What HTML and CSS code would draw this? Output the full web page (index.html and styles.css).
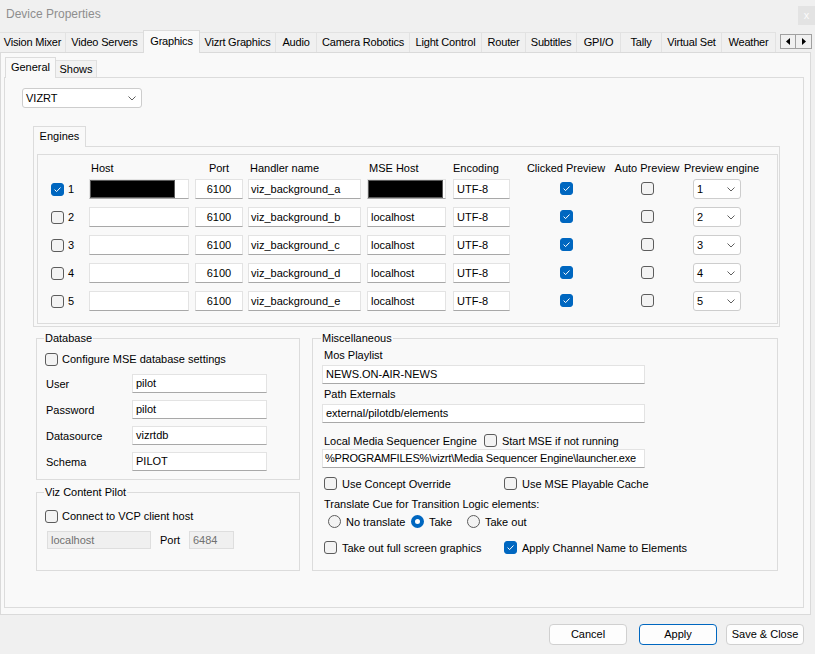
FILE: index.html
```html
<!DOCTYPE html>
<html>
<head>
<meta charset="utf-8">
<title>Device Properties</title>
<link rel="stylesheet" href="styles.css">
</head>
<body>
<div class="titlebar">
  <span class="title">Device Properties</span>
  <span class="close">x</span>
</div>
<div class="tabstrip">
  <div class="tab">Vision Mixer</div>
  <div class="tab">Video Servers</div>
  <div class="tab sel">Graphics</div>
  <div class="tab">Vizrt Graphics</div>
  <div class="tab">Audio</div>
  <div class="tab">Camera Robotics</div>
  <div class="tab">Light Control</div>
  <div class="tab">Router</div>
  <div class="tab">Subtitles</div>
  <div class="tab">GPI/O</div>
  <div class="tab">Tally</div>
  <div class="tab">Virtual Set</div>
  <div class="tab">Weather</div>
  <div class="tabscroll">
    <span class="arr"><svg width="6" height="7" viewBox="0 0 6 7"><path d="M5 0 L1 3.5 L5 7 Z" fill="#000"/></svg></span>
    <span class="arr"><svg width="6" height="7" viewBox="0 0 6 7"><path d="M1 0 L5 3.5 L1 7 Z" fill="#000"/></svg></span>
  </div>
</div>
<div class="outer">
  <div class="subtabs">
    <div class="stab sel">General</div>
    <div class="stab">Shows</div>
  </div>
  <div class="inner">
    <div class="dd vizrt"><span>VIZRT</span><svg class="chev" width="8" height="5" viewBox="0 0 8 5"><path d="M0.5 0.5 L4 4 L7.5 0.5" fill="none" stroke="#5f5f5f" stroke-width="1"/></svg></div>
    <div class="etab">Engines</div>
    <div class="epage">
      <div class="egroup">
        <div class="egrid">
          <div></div>
          <div class="eh pl">Host</div>
          <div class="eh port">Port</div>
          <div class="eh pl">Handler name</div>
          <div class="eh pl">MSE Host</div>
          <div class="eh">Encoding</div>
          <div class="eh ctr">Clicked Preview</div>
          <div class="eh ctr">Auto Preview</div>
          <div class="eh pl">Preview engine</div>

          <div class="en"><span class="cb on"><svg width="11" height="11" viewBox="0 0 11 11"><path d="M2.6 5.6 L4.6 7.6 L8.5 3.5" fill="none" stroke="#fff" stroke-width="1"/></svg></span><span>1</span></div>
          <div class="tb host redact"><span class="mask"></span></div>
          <div class="tb port">6100</div>
          <div class="tb handler">viz_background_a</div>
          <div class="tb mse redact"><span class="mask m2"></span></div>
          <div class="tb enc">UTF-8</div>
          <span class="cb on ecb"><svg width="11" height="11" viewBox="0 0 11 11"><path d="M2.6 5.6 L4.6 7.6 L8.5 3.5" fill="none" stroke="#fff" stroke-width="1"/></svg></span>
          <span class="cb ecb"></span>
          <div class="dd pe"><span>1</span><svg class="chev" width="8" height="5" viewBox="0 0 8 5"><path d="M0.5 0.5 L4 4 L7.5 0.5" fill="none" stroke="#5f5f5f" stroke-width="1"/></svg></div>

          <div class="en"><span class="cb"></span><span>2</span></div>
          <div class="tb host"></div>
          <div class="tb port">6100</div>
          <div class="tb handler">viz_background_b</div>
          <div class="tb mse">localhost</div>
          <div class="tb enc">UTF-8</div>
          <span class="cb on ecb"><svg width="11" height="11" viewBox="0 0 11 11"><path d="M2.6 5.6 L4.6 7.6 L8.5 3.5" fill="none" stroke="#fff" stroke-width="1"/></svg></span>
          <span class="cb ecb"></span>
          <div class="dd pe"><span>2</span><svg class="chev" width="8" height="5" viewBox="0 0 8 5"><path d="M0.5 0.5 L4 4 L7.5 0.5" fill="none" stroke="#5f5f5f" stroke-width="1"/></svg></div>

          <div class="en"><span class="cb"></span><span>3</span></div>
          <div class="tb host"></div>
          <div class="tb port">6100</div>
          <div class="tb handler">viz_background_c</div>
          <div class="tb mse">localhost</div>
          <div class="tb enc">UTF-8</div>
          <span class="cb on ecb"><svg width="11" height="11" viewBox="0 0 11 11"><path d="M2.6 5.6 L4.6 7.6 L8.5 3.5" fill="none" stroke="#fff" stroke-width="1"/></svg></span>
          <span class="cb ecb"></span>
          <div class="dd pe"><span>3</span><svg class="chev" width="8" height="5" viewBox="0 0 8 5"><path d="M0.5 0.5 L4 4 L7.5 0.5" fill="none" stroke="#5f5f5f" stroke-width="1"/></svg></div>

          <div class="en"><span class="cb"></span><span>4</span></div>
          <div class="tb host"></div>
          <div class="tb port">6100</div>
          <div class="tb handler">viz_background_d</div>
          <div class="tb mse">localhost</div>
          <div class="tb enc">UTF-8</div>
          <span class="cb on ecb"><svg width="11" height="11" viewBox="0 0 11 11"><path d="M2.6 5.6 L4.6 7.6 L8.5 3.5" fill="none" stroke="#fff" stroke-width="1"/></svg></span>
          <span class="cb ecb"></span>
          <div class="dd pe"><span>4</span><svg class="chev" width="8" height="5" viewBox="0 0 8 5"><path d="M0.5 0.5 L4 4 L7.5 0.5" fill="none" stroke="#5f5f5f" stroke-width="1"/></svg></div>

          <div class="en"><span class="cb"></span><span>5</span></div>
          <div class="tb host"></div>
          <div class="tb port">6100</div>
          <div class="tb handler">viz_background_e</div>
          <div class="tb mse">localhost</div>
          <div class="tb enc">UTF-8</div>
          <span class="cb on ecb"><svg width="11" height="11" viewBox="0 0 11 11"><path d="M2.6 5.6 L4.6 7.6 L8.5 3.5" fill="none" stroke="#fff" stroke-width="1"/></svg></span>
          <span class="cb ecb"></span>
          <div class="dd pe"><span>5</span><svg class="chev" width="8" height="5" viewBox="0 0 8 5"><path d="M0.5 0.5 L4 4 L7.5 0.5" fill="none" stroke="#5f5f5f" stroke-width="1"/></svg></div>
        </div>
      </div>
    </div>

    <div class="groups">
      <div class="leftcol">
        <div class="group db">
          <div class="legend">Database</div>
          <div class="chkrow first"><span class="cb"></span><span>Configure MSE database settings</span></div>
          <div class="form">
            <span class="flabel">User</span><div class="tb f">pilot</div>
            <span class="flabel">Password</span><div class="tb f">pilot</div>
            <span class="flabel">Datasource</span><div class="tb f">vizrtdb</div>
            <span class="flabel">Schema</span><div class="tb f">PILOT</div>
          </div>
        </div>
        <div class="group vcp">
          <div class="legend">Viz Content Pilot</div>
          <div class="chkrow vfirst"><span class="cb"></span><span>Connect to VCP client host</span></div>
          <div class="vrow">
            <div class="tb dis lh">localhost</div>
            <span class="plabel">Port</span>
            <div class="tb dis pp">6484</div>
          </div>
        </div>
      </div>

      <div class="group misc">
        <div class="legend">Miscellaneous</div>
        <div class="mlabel m1">Mos Playlist</div>
        <div class="tb mi">NEWS.ON-AIR-NEWS</div>
        <div class="mlabel m2">Path Externals</div>
        <div class="tb mi">external/pilotdb/elements</div>
        <div class="lmse">
          <span>Local Media Sequencer Engine</span>
          <span class="cbl"><span class="cb"></span><span>Start MSE if not running</span></span>
        </div>
        <div class="tb mi mi3">%PROGRAMFILES%\vizrt\Media Sequencer Engine\launcher.exe</div>
        <div class="mgrid g1">
          <span class="cbl"><span class="cb"></span><span>Use Concept Override</span></span>
          <span class="cbl"><span class="cb"></span><span>Use MSE Playable Cache</span></span>
        </div>
        <div class="mlabel m4">Translate Cue for Transition Logic elements:</div>
        <div class="radios">
          <span class="rl r1"><span class="rb"></span><span>No translate</span></span>
          <span class="rl r2"><span class="rb on"></span><span>Take</span></span>
          <span class="rl"><span class="rb"></span><span>Take out</span></span>
        </div>
        <div class="mgrid g2">
          <span class="cbl"><span class="cb"></span><span>Take out full screen graphics</span></span>
          <span class="cbl"><span class="cb on"><svg width="11" height="11" viewBox="0 0 11 11"><path d="M2.6 5.6 L4.6 7.6 L8.5 3.5" fill="none" stroke="#fff" stroke-width="1"/></svg></span><span>Apply Channel Name to Elements</span></span>
        </div>
      </div>
    </div>
  </div>
</div>
<div class="buttons">
  <div class="btn">Cancel</div>
  <div class="btn primary">Apply</div>
  <div class="btn save">Save &amp; Close</div>
</div>
</body>
</html>
```

FILE: styles.css
```css
* { box-sizing: border-box; }
html, body { margin: 0; padding: 0; }
body {
  width: 815px;
  height: 654px;
  overflow: hidden;
  background: #f0f0f0;
  font-family: "Liberation Sans", Arial, sans-serif;
  font-size: 11px;
  color: #000;
}

/* title bar */
.titlebar {
  height: 29px;
  display: flex;
  align-items: flex-start;
  justify-content: space-between;
}
.title {
  margin: 7px 0 0 6px;
  font-size: 12px;
  line-height: 14px;
  color: #8e8e8e;
}
.close {
  width: 17px;
  height: 19px;
  margin-top: 6px;
  background: #e3e3e3;
  color: #fbfbfb;
  font-size: 11px;
  line-height: 18px;
  text-align: center;
}

/* main tabs */
.tabstrip {
  height: 23px;
  display: flex;
  align-items: flex-end;
}
.tab {
  height: 20px;
  border-top: 1px solid #e2e2e2;
  border-right: 1px solid #e2e2e2;
  background: #f0f0f0;
  text-align: center;
  line-height: 19px;
  white-space: nowrap;
  letter-spacing: -0.2px;
}
.tab.sel {
  height: 23px;
  margin-bottom: -1px;
  background: #f9f9f9;
  border-left: 1px solid #dcdcdc;
  border-top-color: #dcdcdc;
  border-right-color: #dcdcdc;
  margin-left: -1px;
  line-height: 21px;
  position: relative;
  z-index: 2;
}
.tab:nth-child(1) { width: 66px; }
.tab:nth-child(2) { width: 78px; }
.tab:nth-child(3) { width: 57px; }
.tab:nth-child(4) { width: 76px; }
.tab:nth-child(5) { width: 41px; }
.tab:nth-child(6) { width: 93px; }
.tab:nth-child(7) { width: 72px; }
.tab:nth-child(8) { width: 44px; }
.tab:nth-child(9) { width: 51px; }
.tab:nth-child(10) { width: 44px; }
.tab:nth-child(11) { width: 41px; }
.tab:nth-child(12) { width: 60px; }
.tab:nth-child(13) { width: 54px; }
.tabscroll {
  display: flex;
  margin: 0 0 3px 4px;
}
.arr {
  width: 16px;
  height: 15px;
  border: 1px solid #a0a0a0;
  background: #f0f0f0;
  display: flex;
  align-items: center;
  justify-content: center;
}
.arr + .arr { border-left: none; }

/* outer tab page */
.outer {
  width: 811px;
  height: 563px;
  border: 1px solid #dadada;
  background: #f9f9f9;
  padding: 4px 0 0 3px;
}
.subtabs {
  height: 20px;
  display: flex;
  align-items: flex-end;
}
.stab {
  width: 41px;
  height: 17px;
  border-top: 1px solid #e0e0e0;
  border-right: 1px solid #e0e0e0;
  background: #f2f2f2;
  text-align: center;
  line-height: 16px;
}
.stab.sel {
  width: 51px;
  height: 21px;
  margin: 0 0 -1px 1px;
  border-left: 1px solid #dcdcdc;
  border-top-color: #dcdcdc;
  border-right-color: #dcdcdc;
  background: #f9f9f9;
  line-height: 19px;
  position: relative;
  z-index: 2;
}
.inner {
  width: 800px;
  height: 531px;
  border: 1px solid #dcdcdc;
  background: #f9f9f9;
}

/* dropdowns */
.dd {
  height: 20px;
  display: flex;
  align-items: center;
  justify-content: space-between;
  border: 1px solid #cdcdcd;
  border-radius: 3px;
  background: #fff;
  padding: 0 5px 0 3px;
}
.vizrt {
  width: 120px;
  margin: 10px 0 0 17px;
}
.pe {
  width: 48px;
  margin-left: 11px;
}

/* engines */
.etab {
  width: 53px;
  height: 21px;
  margin: 18px 0 -1px 28px;
  border: 1px solid #dcdcdc;
  border-bottom: none;
  background: #f9f9f9;
  text-align: center;
  line-height: 19px;
  position: relative;
  z-index: 1;
}
.epage {
  width: 747px;
  height: 181px;
  margin-left: 28px;
  border: 1px solid #dcdcdc;
  padding: 7px 0 0 3px;
}
.egroup {
  width: 741px;
  height: 170px;
  border: 1px solid #dcdcdc;
  padding: 2px 0 0 13px;
}
.egrid {
  display: grid;
  grid-template-columns: 38px 106px 53px 119px 86px 67px 92px 70px 60px;
  grid-template-rows: 22px repeat(5, 28px);
  align-items: start;
}
.eh {
  align-self: center;
  line-height: 14px;
  white-space: nowrap;
}
.eh.pl { padding-left: 2px; }
.eh.port { width: 48px; text-align: center; }
.eh.ctr { justify-self: center; }
.en {
  height: 20px;
  display: flex;
  align-items: center;
  gap: 4px;
}

/* text boxes */
.tb {
  height: 20px;
  border: 1px solid #e3e3e3;
  border-bottom-color: #a8a8a8;
  background: #fff;
  padding: 0 3px;
  line-height: 18px;
  white-space: nowrap;
  overflow: hidden;
}
.tb.host { width: 100px; }
.tb.port { width: 48px; text-align: center; }
.tb.handler { width: 113px; padding-left: 2px; }
.tb.mse { width: 79px; }
.tb.enc { width: 57px; }
.tb.redact { padding: 0; }
.mask {
  display: block;
  width: 85px;
  height: 18px;
  background: #000;
  box-shadow: inset 0 0 0 1px #5a5a5a;
}
.mask.m2 { width: 75px; }

/* checkboxes & radios */
.cb {
  width: 13px;
  height: 13px;
  flex: none;
  border: 1px solid #5c5c5c;
  border-radius: 3px;
  background: #f3f3f3;
  display: inline-flex;
  align-items: center;
  justify-content: center;
}
.cb.on {
  background: #0067c0;
  border-color: #0067c0;
}
.ecb {
  justify-self: center;
  margin-top: 3px;
}
.rb {
  width: 13px;
  height: 13px;
  flex: none;
  border: 1px solid #5c5c5c;
  border-radius: 50%;
  background: #f3f3f3;
}
.rb.on {
  border: 4px solid #0067c0;
  background: #fff;
}

/* groups */
.groups {
  display: flex;
  gap: 12px;
  margin: 11px 0 0 31px;
}
.leftcol {
  width: 264px;
  display: flex;
  flex-direction: column;
}
.group {
  border: 1px solid #dcdcdc;
}
.legend {
  width: fit-content;
  height: 14px;
  margin: -8px 0 0 -1px;
  padding: 0 1px;
  background: #f9f9f9;
  line-height: 14px;
}
.db {
  height: 142px;
  padding-left: 8px;
}
.vcp {
  height: 79px;
  margin-top: 12px;
  padding-left: 8px;
}
.chkrow {
  height: 14px;
  display: flex;
  align-items: center;
  gap: 4px;
  white-space: nowrap;
}
.chkrow.first { margin-top: 7px; }
.chkrow.vfirst { margin-top: 10px; }
.form {
  margin-top: 8px;
  display: grid;
  grid-template-columns: 87px 135px;
  grid-auto-rows: 19px;
  row-gap: 7px;
  align-items: center;
}
.flabel { padding-left: 1px; }
.tb.f { height: 19px; line-height: 17px; }
.vrow {
  margin-top: 8px;
  display: flex;
  align-items: center;
}
.tb.dis {
  height: 18px;
  line-height: 16px;
  background: #f0f0f0;
  border-color: #dedede;
  color: #717171;
}
.tb.lh { width: 104px; margin-left: 2px; }
.plabel { width: 29px; margin-left: 9px; }
.tb.pp { width: 45px; }

.misc {
  width: 466px;
  height: 233px;
  padding-left: 9px;
}
.mlabel {
  padding-left: 2px;
  line-height: 15px;
  white-space: nowrap;
}
.mlabel.m1 { margin-top: 3px; }
.mlabel.m2 { margin-top: 3px; }
.mlabel.m4 { margin-top: 6px; }
.tb.mi {
  width: 323px;
  height: 19px;
  line-height: 17px;
  margin-top: 2px;
}
.tb.mi.mi3 {
  margin-top: 1px;
  padding-left: 2px;
  letter-spacing: -0.2px;
}
.lmse {
  height: 15px;
  margin-top: 10px;
  padding-left: 2px;
  display: flex;
  align-items: center;
  gap: 7px;
  white-space: nowrap;
}
.cbl {
  display: flex;
  align-items: center;
  gap: 5px;
  white-space: nowrap;
}
.mgrid {
  height: 15px;
  padding-left: 2px;
  display: grid;
  grid-template-columns: 180px auto;
  align-items: center;
}
.mgrid.g1 { margin-top: 8px; }
.mgrid.g2 { margin-top: 11px; }
.radios {
  height: 15px;
  margin-top: 2px;
  padding-left: 6px;
  display: flex;
  align-items: center;
}
.rl {
  display: flex;
  align-items: center;
  gap: 5px;
  white-space: nowrap;
}
.rl.r1 { width: 83px; }
.rl.r2 { width: 56px; }

/* bottom buttons */
.buttons {
  display: flex;
  justify-content: flex-end;
  padding: 9px 11px 0 0;
}
.btn {
  width: 78px;
  height: 21px;
  border: 1px solid #d0d0d0;
  border-radius: 4px;
  background: #fdfdfd;
  text-align: center;
  line-height: 19px;
  margin-left: 12px;
}
.btn.primary { border-color: #0067c0; }
.btn.save { margin-left: 9px; }
```
